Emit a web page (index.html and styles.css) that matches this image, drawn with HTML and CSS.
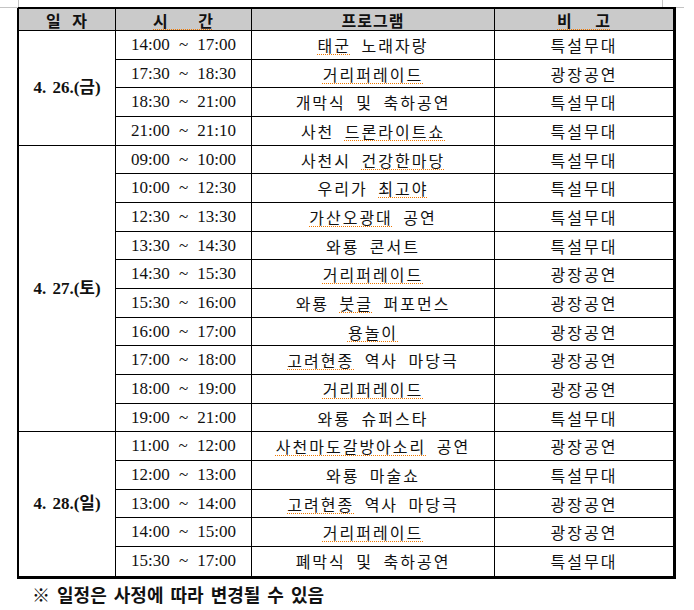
FILE: index.html
```html
<!DOCTYPE html>
<html lang="ko">
<head>
<meta charset="utf-8">
<title>행사 일정</title>
<link rel="stylesheet" href="styles.css">
</head>
<body>
<div class="page">
  <span class="mark mark-tl-v"></span>
  <span class="mark mark-tl-h"></span>
  <span class="mark mark-tr-v"></span>
  <span class="mark mark-tr-h"></span>
  <table class="schedule">
    <colgroup>
      <col class="c-date">
      <col class="c-time">
      <col class="c-prog">
      <col class="c-note">
    </colgroup>
    <thead>
      <tr>
        <th class="h-date">일 자</th>
        <th><span class="sp h-time">시 간</span></th>
        <th>프로그램</th>
        <th><span class="sp h-note">비 고</span></th>
      </tr>
    </thead>
    <tbody>
      <tr>
        <td class="date" rowspan="4">4. 26.<span class="wd">(금)</span></td>
        <td class="time">14:00 ~ 17:00</td>
        <td class="prog"><span class="sp">태군</span> 노래자랑</td>
        <td class="note">특설무대</td>
      </tr>
      <tr>
        <td class="time">17:30 ~ 18:30</td>
        <td class="prog"><span class="sp">거리퍼레이드</span></td>
        <td class="note">광장공연</td>
      </tr>
      <tr>
        <td class="time">18:30 ~ 21:00</td>
        <td class="prog">개막식 및 축하공연</td>
        <td class="note">특설무대</td>
      </tr>
      <tr>
        <td class="time">21:00 ~ 21:10</td>
        <td class="prog">사천 <span class="sp">드론라이트쇼</span></td>
        <td class="note">특설무대</td>
      </tr>

      <tr>
        <td class="date" rowspan="10">4. 27.<span class="wd">(토)</span></td>
        <td class="time">09:00 ~ 10:00</td>
        <td class="prog">사천시 <span class="sp">건강한마당</span></td>
        <td class="note">특설무대</td>
      </tr>
      <tr>
        <td class="time">10:00 ~ 12:30</td>
        <td class="prog">우리가 <span class="sp">최고야</span></td>
        <td class="note">특설무대</td>
      </tr>
      <tr>
        <td class="time">12:30 ~ 13:30</td>
        <td class="prog"><span class="sp">가산오광대</span> 공연</td>
        <td class="note">특설무대</td>
      </tr>
      <tr>
        <td class="time">13:30 ~ 14:30</td>
        <td class="prog">와룡 콘서트</td>
        <td class="note">특설무대</td>
      </tr>
      <tr>
        <td class="time">14:30 ~ 15:30</td>
        <td class="prog"><span class="sp">거리퍼레이드</span></td>
        <td class="note">광장공연</td>
      </tr>
      <tr>
        <td class="time">15:30 ~ 16:00</td>
        <td class="prog">와룡 <span class="sp">붓글</span> 퍼포먼스</td>
        <td class="note">광장공연</td>
      </tr>
      <tr>
        <td class="time">16:00 ~ 17:00</td>
        <td class="prog"><span class="sp">용놀이</span></td>
        <td class="note">광장공연</td>
      </tr>
      <tr>
        <td class="time">17:00 ~ 18:00</td>
        <td class="prog"><span class="sp">고려현종</span> 역사 마당극</td>
        <td class="note">광장공연</td>
      </tr>
      <tr>
        <td class="time">18:00 ~ 19:00</td>
        <td class="prog"><span class="sp">거리퍼레이드</span></td>
        <td class="note">광장공연</td>
      </tr>
      <tr>
        <td class="time">19:00 ~ 21:00</td>
        <td class="prog">와룡 슈퍼스타</td>
        <td class="note">특설무대</td>
      </tr>

      <tr>
        <td class="date date-last" rowspan="5">4. 28.<span class="wd">(일)</span></td>
        <td class="time">11:00 ~ 12:00</td>
        <td class="prog"><span class="sp">사천마도갈방아소리</span> 공연</td>
        <td class="note">광장공연</td>
      </tr>
      <tr>
        <td class="time">12:00 ~ 13:00</td>
        <td class="prog">와룡 마술쇼</td>
        <td class="note">특설무대</td>
      </tr>
      <tr>
        <td class="time">13:00 ~ 14:00</td>
        <td class="prog"><span class="sp">고려현종</span> 역사 마당극</td>
        <td class="note">광장공연</td>
      </tr>
      <tr>
        <td class="time">14:00 ~ 15:00</td>
        <td class="prog"><span class="sp">거리퍼레이드</span></td>
        <td class="note">광장공연</td>
      </tr>
      <tr class="last">
        <td class="time">15:30 ~ 17:00</td>
        <td class="prog">폐막식 및 축하공연</td>
        <td class="note">특설무대</td>
      </tr>
    </tbody>
  </table>
  <p class="footnote">※ 일정은 사정에 따라 변경될 수 있음</p>
</div>
</body>
</html>
```

FILE: styles.css
```css
html, body {
  margin: 0;
  padding: 0;
  background: #ffffff;
}

body {
  font-family: "Noto Sans CJK KR", "Noto Sans", sans-serif;
  color: #111;
}

.page {
  position: relative;
  width: 694px;
  height: 610px;
  padding: 7px 0 0 17px;
  box-sizing: border-box;
  overflow: hidden;
}

/* page corner marks of the word processor */
.mark {
  position: absolute;
  background: #c4c4c4;
}
.mark-tl-v { left: 18px; top: 0; width: 1px; height: 7px; }
.mark-tl-h { left: 0; top: 7px; width: 18px; height: 1px; }
.mark-tr-v { left: 662px; top: 0; width: 1px; height: 7px; }
.mark-tr-h { left: 676px; top: 7px; width: 8px; height: 1px; }

.schedule {
  border-collapse: separate;
  border-spacing: 0;
  table-layout: fixed;
  width: 659px;
  border-top: 2px solid #000;
  border-left: 2px solid #000;
  border-right: 3px solid #000;
  border-bottom: 3px solid #000;
}

.c-date { width: 97px; }
.c-time { width: 136px; }
.c-prog { width: 243px; }
.c-note { width: 178px; }

.schedule th,
.schedule td {
  padding: 0;
  text-align: center;
  vertical-align: middle;
  border-right: 1px solid #000;
  border-bottom: 1px solid #000;
  white-space: nowrap;
}

.schedule th:last-child,
.schedule td:last-child {
  border-right: 0;
}

.schedule thead tr {
  height: 22px;
}

.schedule th {
  background: #cacaca;
  font-weight: 700;
  font-size: 16px;
  line-height: 20px;
  letter-spacing: 1px;
  color: #111;
}

.h-date { word-spacing: 5px; }
.h-time { word-spacing: 24px; }
.h-note { word-spacing: 17px; }

.schedule tbody tr {
  height: 28.68px;
}

.schedule tr.last td,
.schedule td.date-last {
  border-bottom: 0;
}

.date {
  font-family: "Liberation Serif", "Noto Sans CJK KR", serif;
  font-weight: 700;
  font-size: 17px;
  line-height: 20px;
  word-spacing: 2px;
}

.time {
  font-family: "Liberation Serif", serif;
  font-size: 17px;
  line-height: 20px;
  word-spacing: 5px;
}

.prog,
.note {
  font-size: 16px;
  line-height: 20px;
  font-weight: 400;
  letter-spacing: 2px;
  word-spacing: 4px;
}

.sp {
  text-decoration: underline dotted #f07800;
  text-decoration-thickness: 1px;
  text-underline-offset: 2px;
  text-decoration-skip-ink: none;
}

.footnote {
  margin: 5px 0 0 15px;
  font-weight: 700;
  font-size: 18px;
  line-height: 20px;
  word-spacing: 2px;
  color: #111;
}
```
